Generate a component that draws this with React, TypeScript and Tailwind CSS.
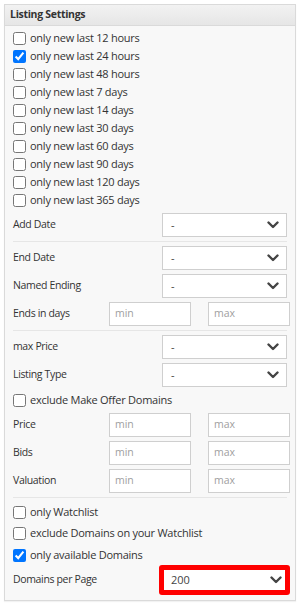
import React from "react";

const font = { fontFamily: '"Open Sans", "Noto Sans", sans-serif' };

function Check({ label, checked = false, cls = "h-[18px]" }: { label: string; checked?: boolean; cls?: string }) {
  return (
    <label className={`flex items-center ${cls}`}>
      <input type="checkbox" defaultChecked={checked} className="m-0 h-[13px] w-[13px] shrink-0 accent-[#0075ff]" />
      <span className="ml-[4px] text-[11px] tracking-[-0.25px] text-[#333]">{label}</span>
    </label>
  );
}

function Chevron() {
  return (
    <svg width="12" height="8" viewBox="0 0 12 8" className="shrink-0">
      <path d="M1.5 1.5 L6 6 L10.5 1.5" fill="none" stroke="#444" strokeWidth="2.4" strokeLinecap="round" strokeLinejoin="round" />
    </svg>
  );
}

function Select({ value = "-" }: { value?: string }) {
  return (
    <div className="flex h-[24px] w-[125px] items-center justify-between border border-[#cfcfcf] bg-white pl-[8px] pr-[7px]">
      <span className="text-[11px] text-[#444]">{value}</span>
      <Chevron />
    </div>
  );
}

const labelCls = "text-[10.5px] tracking-[-0.35px] text-[#333]";

function SelectRow({ label }: { label: string }) {
  return (
    <div className="flex h-[24px] items-center justify-between">
      <span className={labelCls}>{label}</span>
      <Select />
    </div>
  );
}

function RangeRow({ label }: { label: string }) {
  return (
    <div className="flex h-[24px] items-center">
      <span className={`w-[96px] ${labelCls}`}>{label}</span>
      <div className="flex h-[24px] w-[82px] items-center border border-[#cfcfcf] bg-white pl-[5px] text-[10.5px] text-[#a0a0a0]">min</div>
      <div className="ml-[17px] mr-[-3px] flex h-[24px] w-[82px] items-center border border-[#cfcfcf] bg-white pl-[5px] text-[10.5px] text-[#a0a0a0]">max</div>
    </div>
  );
}

function Sep() {
  return <div className="my-[4px] h-px bg-[#e6e6e6]" />;
}

export default function App() {
  const hours = [
    "only new last 12 hours",
    "only new last 24 hours",
    "only new last 48 hours",
    "only new last 7 days",
    "only new last 14 days",
    "only new last 30 days",
    "only new last 60 days",
    "only new last 90 days",
    "only new last 120 days",
    "only new last 365 days",
  ];
  return (
    <div className="h-[608px] w-[303px] bg-white pl-[4px] pt-[4px]" style={font}>
      <div className="w-[292px] border border-[#dadada] bg-[#f8f8f8] shadow-[0_1px_1px_rgba(0,0,0,0.05)]">
        <div className="flex h-[21px] items-center border-b border-[#dadada] bg-gradient-to-b from-[#f2f2f2] to-[#e6e6e6] pl-[5px] text-[10.5px] font-bold tracking-[-0.3px] text-[#333]">
          Listing Settings
        </div>
        <div className="px-[8px] pb-[5px] pt-[3px]">
          <div className="flex flex-col">
            {hours.map((h, i) => (
              <Check key={h} label={h} checked={i === 1} />
            ))}
          </div>
          <div className="mt-[4px]">
            <SelectRow label="Add Date" />
          </div>
          <Sep />
          <div className="flex flex-col gap-[4px]">
            <SelectRow label="End Date" />
            <SelectRow label="Named Ending" />
            <RangeRow label="Ends in days" />
          </div>
          <Sep />
          <div className="flex flex-col gap-[4px]">
            <SelectRow label="max Price" />
            <SelectRow label="Listing Type" />
          </div>
          <div className="mt-[4px]">
            <Check label="exclude Make Offer Domains" />
          </div>
          <div className="mt-[4px] flex flex-col gap-[4px]">
            <RangeRow label="Price" />
            <RangeRow label="Bids" />
            <RangeRow label="Valuation" />
          </div>
          <Sep />
          <div className="mt-[3px] flex flex-col gap-[1.5px]">
            <Check label="only Watchlist" cls="h-[20px]" />
            <Check label="exclude Domains on your Watchlist" cls="h-[20px]" />
            <Check label="only available Domains" checked cls="h-[20px]" />
          </div>
          <div className="flex h-[30px] items-center justify-between">
            <span className={labelCls}>Domains per Page</span>
            <div className="mr-[-3px] rounded-[3px] border-[5px] border-[#ff0000]">
              <div className="flex h-[20px] w-[121px] items-center justify-between bg-white pl-[7px] pr-[3px]">
                <span className="text-[11px] text-[#444]">200</span>
                <Chevron />
              </div>
            </div>
          </div>
        </div>
      </div>
    </div>
  );
}
